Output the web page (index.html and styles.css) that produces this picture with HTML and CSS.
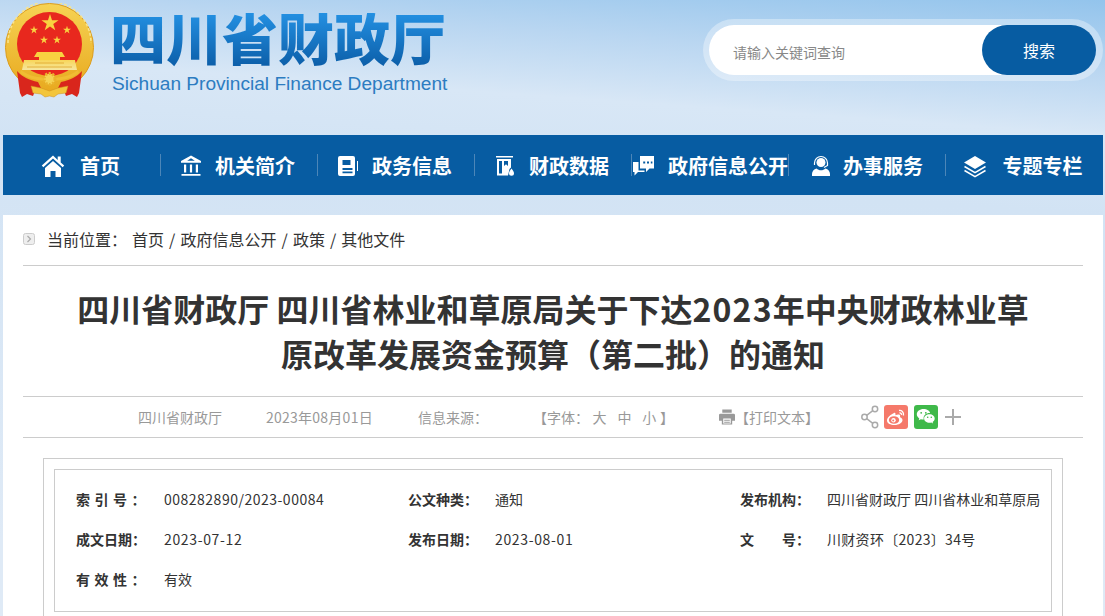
FILE: index.html
```html
<!DOCTYPE html>
<html lang="zh-CN">
<head>
    <meta charset="UTF-8">
    <meta name="viewport" content="width=device-width, initial-scale=1.0">
    <title>四川省财政厅</title>
    <link rel="stylesheet" href="styles.css">
</head>
<body>
    <svg class="defs" width="0" height="0">
        <defs>
            <polygon id="star" points="0,-1 .225,-.309 .951,-.309 .363,.118 .588,.809 0,.382 -.588,.809 -.363,.118 -.951,-.309 -.225,-.309"/>
            <linearGradient id="gold" x1="0" y1="0" x2="0" y2="1">
                <stop offset="0" stop-color="#f6d354"/>
                <stop offset="1" stop-color="#e8a91f"/>
            </linearGradient>
            <linearGradient id="gate" x1="0" y1="0" x2="0" y2="1">
                <stop offset="0" stop-color="#f8d658"/>
                <stop offset="1" stop-color="#f6e6a0"/>
            </linearGradient>
        </defs>
    </svg>

    <header class="header">
        <div class="logo">
            <svg class="emblem" width="96" height="98" viewBox="0 0 96 98">
                <ellipse cx="44.500" cy="44.500" rx="44" ry="44" fill="url(#gold)" stroke="#dc9c1c"/>
                <path d="M3 40a41.500 41.500 0 0 1 83 0" fill="none" stroke="#f9e58f" stroke-width="1.500" stroke-dasharray="3 2"/>
                <ellipse cx="44.500" cy="41" rx="32.500" ry="32" fill="#e8281e"/>
                <g fill="#f8d340">
                    <use href="#star" transform="translate(45 20) scale(9)"/>
                    <use href="#star" transform="translate(29 27) scale(4.200)"/>
                    <use href="#star" transform="translate(62 27) scale(4.200)"/>
                    <use href="#star" transform="translate(39 37) scale(4.200)"/>
                    <use href="#star" transform="translate(52 37) scale(4.200)"/>
                    <path d="M32 49h25l3 5H29zM34 54h21v3H34z"/>
                </g>
                <path d="M19 57h51l2 10H17z" fill="url(#gate)"/>
                <path d="M30 60h29M22 64h45" stroke="#e0a52a" stroke-width=".8"/>
                <path d="M12 68c5 6 12 9 21 11l3 6-6 3-2 5-6-2-5 3-2-4z" fill="#d9261c"/>
                <path d="M77 68c-5 6-12 9-21 11l-3 6 6 3 2 5 6-2 5 3 2-4z" fill="#d9261c"/>
                <path d="M16 67c8 6 17 8 28.500 8S65 73 73 67l1 3c-8 6-18 8-29.500 8S23 76 15 70z" fill="#f0bd33"/>
                <circle cx="44.500" cy="76" r="5.500" fill="#f6d354" stroke="#eab32c" stroke-width="3" stroke-dasharray="2 1.500"/>
                <path d="M26 83l10 2 8.500 3 8.500-3 10-2-2 7-8 1-4 3-4.500-1-4.500 1-4-3-8-1z" fill="#f3c53c" stroke="#d08f1c" stroke-width=".5"/>
            </svg>
            <div class="logo-text">
                <div class="logo-cn">四川省财政厅</div>
                <div class="logo-en">Sichuan Provincial Finance Department</div>
            </div>
        </div>
        <form class="search">
            <span class="search-input">请输入关键词查询</span>
            <span class="search-btn">搜索</span>
        </form>
    </header>

    <nav class="nav">
        <a class="nav-item nav-item-home">
            <svg class="nav-icon" viewBox="0 0 24 24" fill="#fff"><path d="M12 1.500 .8 11.600l1.500 1.700L12 4.600l9.700 8.700 1.500-1.700-3.500-3.100V2.500h-3v3.400zM12 7 4 14v9h5.500v-6h5v6H20v-9z"/></svg>
            首页
        </a>
        <a class="nav-item">
            <svg class="nav-icon" viewBox="0 0 24 24" fill="#fff"><path d="M12 1.500 2 7v1.800h20V7zM12 4.200l3.800 2.600H8.200zM5 10.500h2.200v8H5zM10.900 10.500h2.200v8h-2.200zM16.800 10.500H19v8h-2.200zM2.500 20h19v1.800h-19z"/></svg>
            机关简介
        </a>
        <a class="nav-item">
            <svg class="nav-icon" viewBox="0 0 24 24"><path fill="#fff" fill-rule="evenodd" d="M4 2h13a2 2 0 0 1 2 2v16a2 2 0 0 1-2 2H4a2 2 0 0 1-2-2V4a2 2 0 0 1 2-2zm2.500 4v5h8V6zm0 8v2h10v-2zm0 3.500v1.800h10v-1.800z"/><path fill="#fff" d="M21 7h1v10h-1z"/></svg>
            政务信息
        </a>
        <a class="nav-item">
            <svg class="nav-icon" viewBox="0 0 24 24" fill="#fff"><path d="M3 2h17v1.500H3z"/><path fill-rule="evenodd" d="M4 5h14v8.500l-1.500 1.500-1.500 6.500H4zm2 2v12.500h3V7zm5 0v5l2-1.800 2 1.800V7z"/><path d="M18.500 14.500c1.700 2.200 2.500 3.500 2.500 4.800a2.500 2.500 0 0 1-5 0c0-1.300.8-2.600 2.500-4.800z"/></svg>
            财政数据
        </a>
        <a class="nav-item nav-item-open">
            <svg class="nav-icon" viewBox="0 0 24 24" fill="#fff"><path fill-rule="evenodd" d="M8 2h14v12.500h-4.500L14 18v-3.500H8zm3.200 5.500v2h2v-2zm3.800 0v2h2v-2zm3.800 0v2h1.600v-2z"/><path d="M1 8h5.500v8.500h6V18H6l-3.500 3.500V18H1z"/></svg>
            政府信息公开
        </a>
        <a class="nav-item nav-item-service">
            <svg class="nav-icon" viewBox="0 0 24 24"><circle cx="12" cy="8.500" r="4.500" fill="#fff"/><path d="M5.500 11V9a6.500 6.500 0 0 1 13 0v2.500l-3.500 2" fill="none" stroke="#fff" stroke-width="1.200"/><path fill="#fff" d="M7.500 14.500c1.300 1.200 2.800 1.800 4.500 1.800s3.200-.6 4.500-1.800c2.600.9 4.500 2.900 4.500 5.500v2H3v-2c0-2.600 1.900-4.600 4.500-5.500z"/></svg>
            办事服务
        </a>
        <a class="nav-item nav-item-topic">
            <svg class="nav-icon" viewBox="0 0 24 24"><path fill="#fff" d="M12 2 23 8.500 12 15 1 8.500z"/><path d="M1.500 12.500 12 18.700l10.500-6.200M1.500 16.500 12 22.700l10.500-6.200" fill="none" stroke="#fff" stroke-width="1.500"/></svg>
            专题专栏
        </a>
    </nav>

    <main class="content">
        <div class="crumb">
            <svg class="crumb-icon" width="12" height="12" viewBox="0 0 12 12"><rect x=".5" y=".5" width="11" height="11" rx="2" fill="#eee" stroke="#ccc"/><path d="M4.500 3 7.500 6l-3 3" fill="none" stroke="#aaa" stroke-width="1.200"/></svg>
            <span class="crumb-label">当前位置：</span>
            <span class="crumb-path">首页 / 政府信息公开 / 政策 / 其他文件</span>
        </div>

        <h1 class="title">四川省财政厅 四川省林业和草原局关于下达<span class="title-num">2023</span>年中央财政林业草<br>原改革发展资金预算（第二批）的通知</h1>

        <div class="info">
            <span class="info-source">四川省财政厅</span>
            <span class="info-date">2023年08月01日</span>
            <span class="info-from">信息来源：</span>
            <span class="info-font">【字体： 大&nbsp;&nbsp; 中&nbsp;&nbsp; 小 】</span>
            <span class="info-print">
                <svg width="16" height="16" viewBox="0 0 17 16" fill="#999"><path fill-rule="evenodd" d="M3.500 0h10v3.500h-10zM1.500 4.500h14a1.500 1.500 0 0 1 1.500 1.500v6h-3v4H3v-4H0V6a1.500 1.500 0 0 1 1.500-1.500zM4.500 9.500V15h8V9.500z"/><path d="M5.500 11h6v1h-6zM5.500 13h6v1h-6z"/></svg>
                【打印文本】
            </span>
            <span class="share">
                <svg width="18" height="24" viewBox="0 0 18 24" fill="none" stroke="#aaa" stroke-width="1.500"><circle cx="3.500" cy="12" r="2.700"/><circle cx="14" cy="4" r="2.700"/><circle cx="14" cy="20" r="2.700"/><path d="M5.700 10.300 11.800 5.700M5.700 13.700l6.100 4.600"/></svg>
                <span class="share-btn weibo">
                    <svg width="20" height="18" viewBox="0 0 20 18"><path fill="#fff" d="M8 5c-3.500 1.500-7 4.700-7 7.500C1 15.500 4.500 17 8.500 17c4.500 0 8-2.300 8-5 0-1.600-1.400-2.300-2.600-2.700.4-1 .4-2-.3-2.500-.9-.7-2.700-.3-4.200.4.400-1.700-.2-3.300-1.400-2.200z"/><ellipse cx="8" cy="12" rx="5.200" ry="3.800" fill="#f5796a"/><circle cx="7.500" cy="12.300" r="2.200" fill="#fff"/><circle cx="7.200" cy="12.500" r="1" fill="#f5796a"/><path d="M13 2.500c2.500-.5 5 1.500 4.500 5M13.500 5c1.300-.3 2.300.8 2 2" fill="none" stroke="#fff" stroke-width="1.300"/></svg>
                </span>
                <span class="share-btn wechat">
                    <svg width="20" height="18" viewBox="0 0 20 18" fill="#fff"><path d="M7.500 1C3.700 1 .8 3.400.8 6.300c0 1.700 1 3.100 2.500 4.100l-.6 1.900 2.200-1.100c.8.200 1.500.3 2.300.3h.6a5 5 0 0 1-.2-1.400c0-2.800 2.600-5 6-5h.5C13.900 2.800 11 1 7.500 1z"/><path d="M13.500 6.200c-3 0-5.400 1.900-5.400 4.300s2.400 4.300 5.400 4.300c.6 0 1.200-.1 1.800-.3l1.800 1-.5-1.600c1.300-.8 2.100-2 2.100-3.400 0-2.400-2.300-4.300-5.200-4.300z"/><circle cx="5.200" cy="4.800" r=".9" fill="#3fb94a"/><circle cx="9.800" cy="4.800" r=".9" fill="#3fb94a"/><circle cx="11.700" cy="9.300" r=".8" fill="#3fb94a"/><circle cx="15.300" cy="9.300" r=".8" fill="#3fb94a"/></svg>
                </span>
                <svg class="share-plus" width="18" height="18" viewBox="0 0 18 18" fill="#aaa"><path d="M8 1h2v7h7v2h-7v7H8v-7H1V8h7z"/></svg>
            </span>
        </div>

        <div class="meta-outer">
            <div class="meta">
                <div class="meta-row">
                    <b class="spread">索引号：</b><span class="num">008282890/2023-00084</span>
                    <b>公文种类：</b><span>通知</span>
                    <b>发布机构：</b><span>四川省财政厅 四川省林业和草原局</span>
                </div>
                <div class="meta-row">
                    <b>成文日期：</b><span class="date">2023-07-12</span>
                    <b>发布日期：</b><span class="date">2023-08-01</span>
                    <b>文&emsp;&emsp;号：</b><span class="doc-no">川财资环〔2023〕34号</span>
                </div>
                <div class="meta-row">
                    <b class="spread">有效性：</b><span>有效</span>
                </div>
            </div>
        </div>
    </main>
</body>
</html>
```

FILE: styles.css
```css
* { box-sizing: border-box; }
html, body { height: 100%; }
body {
    margin: 0;
    height: 616px;
    overflow: hidden;
    padding: 0 2px 0 3px;
    font-family: "Liberation Sans", "Noto Sans CJK SC", sans-serif;
    color: #333;
    background: linear-gradient(184deg, #93c4ec 0, #b9d6f1 70px, #d8e7f6 135px, #d2e3f4 215px, #dfeaf6 616px);
}
.defs { position: absolute; }

/* header */
.header {
    height: 135px;
    margin-left: -3px;
    margin-right: -2px;
    padding: 0 2px 0 5px;
    display: flex;
    justify-content: space-between;
}
.logo { display: flex; padding-top: 3px; }
.emblem { flex: none; }
.logo-text { margin-left: 9px; padding-top: 10px; }
.logo-cn {
    font-family: "Liberation Sans", "Noto Sans CJK SC", sans-serif;
    font-size: 56px;
    font-weight: 900;
    line-height: 56px;
    background: linear-gradient(#2390e2, #0b5ca6);
    -webkit-background-clip: text;
    background-clip: text;
    color: transparent;
}
.logo-en {
    font-size: 19.1px;
    line-height: 24px;
    margin-top: 3px;
    margin-left: 2px;
    color: #2c7cc1;
}
.search {
    width: 400px;
    height: 62px;
    margin-top: 19px;
    padding: 6px 7px 6px 6px;
    display: flex;
    justify-content: space-between;
    border-radius: 31px;
    background: rgba(255, 255, 255, 0.35);
}
.search-input {
    flex: 1;
    height: 50px;
    padding-left: 24px;
    font-family: "Noto Sans CJK SC", sans-serif;
    font-size: 14px;
    line-height: 55px;
    color: #888;
    background: #fff;
    border-radius: 25px 0 0 25px;
}
.search-btn {
    width: 114px;
    margin-left: -25px;
    text-align: center;
    font-family: "Noto Sans CJK SC", sans-serif;
    font-size: 16px;
    line-height: 50px;
    color: #fff;
    background: #075ca2;
    border-radius: 25px;
}

/* nav */
.nav {
    height: 60px;
    padding-left: 1px;
    display: flex;
    align-items: center;
    background: #075ca2;
}
.nav-item {
    flex: 0 0 157px;
    min-width: 0;
    height: 22px;
    padding: 1px 4px 0 0;
    display: flex;
    align-items: center;
    justify-content: center;
    gap: 12px;
    font-family: "Noto Sans CJK SC", sans-serif;
    font-size: 20px;
    font-weight: 700;
    white-space: nowrap;
    color: #fff;
    border-right: 1px solid #4c86b8;
}
.nav-item:last-child { border-right: none; }
.nav-item-home { gap: 15px; padding-right: 3px; }
.nav-item-open { padding-right: 0; }
.nav-item-service { gap: 10px; padding-right: 2px; }
.nav-item-topic { gap: 16px; }
.nav-icon { width: 24px; height: 24px; flex: none; }

/* content */
.content {
    margin-top: 20px;
    padding: 0 20px;
    height: 401px;
    overflow: hidden;
    background: #fff;
}
.crumb {
    height: 51px;
    padding-bottom: 2px;
    display: flex;
    align-items: center;
    font-family: "Noto Sans CJK SC", sans-serif;
    font-size: 16px;
    color: #333;
    border-bottom: 1px solid #ccc;
}
.crumb-icon { margin-right: 12px; flex: none; }
.crumb-label { margin-right: 5px; }
.crumb-path { word-spacing: 1.5px; }

.title {
    margin: 0;
    padding: 20px 0;
    font-family: "Noto Sans CJK SC", sans-serif;
    font-size: 32px;
    font-weight: 700;
    line-height: 45px;
    text-align: center;
    color: #333;
}
.title-num { letter-spacing: 1.2px; }

.info {
    height: 42px;
    display: flex;
    align-items: center;
    font-family: "Noto Sans CJK SC", sans-serif;
    font-size: 14px;
    color: #999;
    border-top: 1px solid #ccc;
    border-bottom: 1px solid #ccc;
}
.info-source { margin-left: 115px; }
.info-date { margin-left: 44px; letter-spacing: .25px; }
.info-from { margin-left: 45px; }
.info-font { margin-left: 45px; white-space: nowrap; word-spacing: .5px; }
.info-print { margin-left: 45px; display: flex; align-items: center; white-space: nowrap; }
.share { margin-left: 42px; display: flex; align-items: center; }
.share-btn {
    width: 24px;
    height: 24px;
    margin-left: 6px;
    display: flex;
    align-items: center;
    justify-content: center;
    border-radius: 3px;
}
.weibo { background: #f5796a; margin-left: 5px; }
.wechat { background: #3fb94a; }
.share-plus { margin-left: 6px; }

.meta-outer {
    margin: 20px 20px 0;
    padding: 10px;
    height: 200px;
    border: 1px solid #ccc;
}
.meta {
    height: 143px;
    padding: 9px 0 0 21px;
    border: 1px solid #ccc;
    font-family: "Noto Sans CJK SC", sans-serif;
    font-size: 14px;
    color: #333;
}
.meta-row {
    height: 40px;
    display: grid;
    grid-template-columns: 88px 244px 87px 245px 87px auto;
    align-items: center;
    white-space: nowrap;
}
.meta b { font-weight: 700; }
.meta .spread { letter-spacing: 4.5px; }
.meta .num { letter-spacing: .5px; }
.meta .date { letter-spacing: .65px; }
.meta .doc-no { letter-spacing: .3px; }
```
